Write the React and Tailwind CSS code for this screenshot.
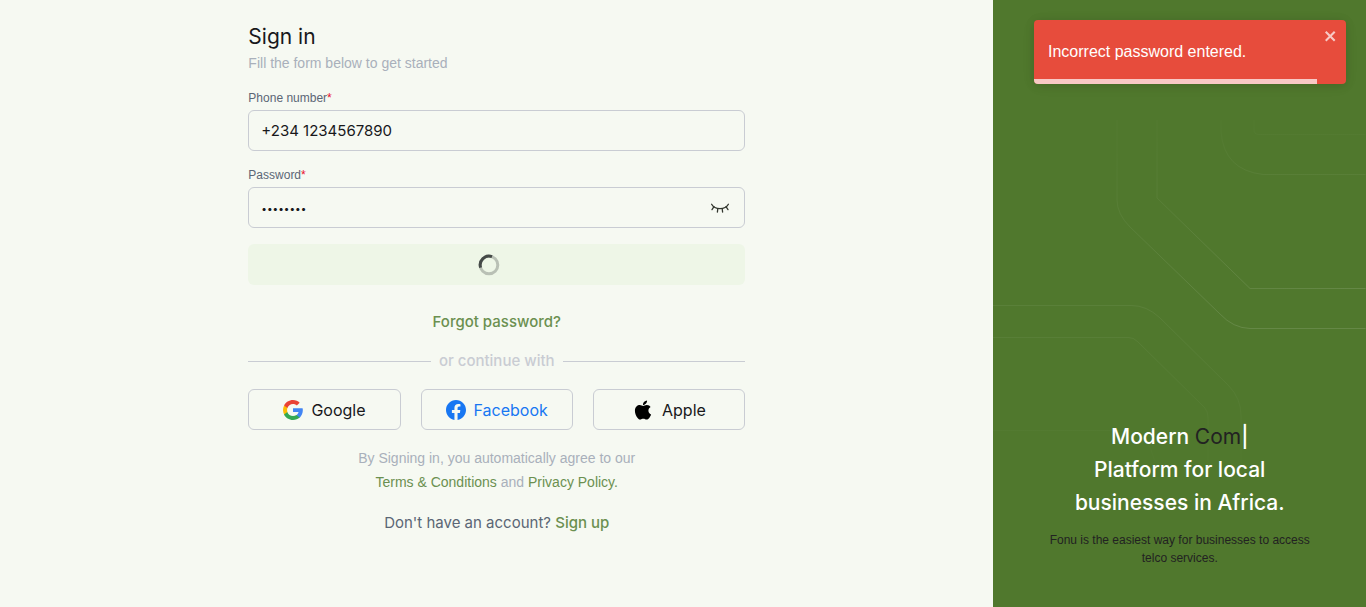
import { useState } from "react";
import { FaApple } from "react-icons/fa";

const fieldClass =
  "block h-[41px] w-full rounded-md border border-[#c9ccd3] bg-transparent px-3 text-[#18181b] outline-none";

const labelClass = "mb-1 block font-['Liberation_Sans',Arial,sans-serif] text-xs leading-4 text-[#5b6675]";

function EyeClosedIcon() {
  return (
    <svg width="20" height="20" viewBox="0 0 20 20" fill="none" stroke="#33372f" strokeWidth="1.3" strokeLinecap="round" aria-hidden="true">
      <path d="M1.6 6.2C3.2 9 6.2 10.600 10 10.600s6.8-1.600 8.400-4.400" />
      <path d="M4 8.700 2 11.600M16 8.700l2 2.900M7.800 10.600l-.4 3.400M12.200 10.600l.4 3.400" />
    </svg>
  );
}

function Spinner() {
  return (
    <svg className="mr-4" width="22" height="22" viewBox="0 0 22 22" fill="none" strokeWidth="3" aria-hidden="true">
      <circle cx="11" cy="11" r="8.8" stroke="#b9c0b5" />
      <path d="M2.6 13.600A8.800 8.800 0 0 1 14 2.700" stroke="#454a48" />
    </svg>
  );
}

function GoogleIcon() {
  return (
    <svg width="20" height="20" viewBox="0 0 24 24" aria-hidden="true">
      <path fill="#4285f4" d="M23.500 9.800H12v4.700h6.600c-.3 1.500-1.200 2.800-2.500 3.700v3h4c2.300-2.200 3.700-5.300 3.700-9.100 0-.8-.1-1.600-.3-2.300z" />
      <path fill="#34a853" d="M12 24c3.300 0 6-1.100 8-2.900l-3.900-3c-1.100.7-2.500 1.200-4.100 1.200-3.200 0-5.800-2.100-6.800-5h-4v3.100C3.200 21.300 7.300 24 12 24z" />
      <path fill="#fbbc05" d="M5.300 14.300c-.3-.7-.4-1.500-.4-2.300s.1-1.600.4-2.300V6.600h-4C.5 8.200 0 10.100 0 12s.5 3.800 1.300 5.400l4-3.100z" />
      <path fill="#ea4335" d="M12 4.800c1.800 0 3.400.6 4.600 1.800l3.400-3.400C18 1.200 15.200 0 12 0 7.300 0 3.200 2.700 1.300 6.600l4 3.100c.9-2.800 3.500-4.900 6.700-4.900z" />
    </svg>
  );
}

function FacebookIcon() {
  return (
    <svg width="20" height="20" viewBox="0 0 24 24" aria-hidden="true">
      <path fill="#1877f2" d="M24 12.073C24 5.446 18.627.073 12 .073S0 5.446 0 12.073c0 5.990 4.388 10.954 10.125 11.854v-8.385H7.078v-3.470h3.047V9.430c0-3.007 1.792-4.669 4.533-4.669 1.312 0 2.686.235 2.686.235v2.953H15.830c-1.491 0-1.956.925-1.956 1.874v2.250h3.328l-.532 3.470h-2.796v8.385C19.612 23.027 24 18.062 24 12.073z" />
    </svg>
  );
}

function SocialButton({ icon, label, blue }) {
  return (
    <button
      type="button"
      className={`flex h-[41px] flex-1 items-center justify-center gap-2 rounded-md border border-[#c9ccd3] text-base ${blue ? "text-[#1877f2]" : "text-[#18181b]"}`}
    >
      {icon}
      {label}
    </button>
  );
}

function CircuitLines() {
  return (
    <svg className="absolute inset-0 h-full w-full" viewBox="0 0 373 607" preserveAspectRatio="xMaxYMin slice" fill="none" aria-hidden="true">
      <defs>
        <linearGradient id="fadeUp" gradientUnits="userSpaceOnUse" x1="260" y1="330" x2="180" y2="130">
          <stop offset="0" stopColor="#fff" stopOpacity=".12" />
          <stop offset="1" stopColor="#fff" stopOpacity=".02" />
        </linearGradient>
        <linearGradient id="fadeRight" gradientUnits="userSpaceOnUse" x1="0" y1="120" x2="0" y2="176">
          <stop offset="0" stopColor="#fff" stopOpacity=".01" />
          <stop offset="1" stopColor="#fff" stopOpacity=".05" />
        </linearGradient>
        <linearGradient id="fadeDown" gradientUnits="userSpaceOnUse" x1="0" y1="300" x2="0" y2="490">
          <stop offset="0" stopColor="#fff" stopOpacity=".06" />
          <stop offset="1" stopColor="#fff" stopOpacity="0" />
        </linearGradient>
      </defs>
      <g stroke="url(#fadeUp)">
        <path d="M124.500 120v80q0 14 13 27l90 87q13 14 30 14.500H373" />
        <path d="M164.500 120v78l93 90.500H373" />
      </g>
      <g stroke="url(#fadeRight)">
        <path d="M228.500 120v12q3 38 42 42.500H373" />
        <path d="M261.500 120v10q0 4.500 5 4.500H373" />
      </g>
      <g stroke="url(#fadeDown)">
        <path d="M0 305.500h139q15 0 28 12l69 68q12.500 13 12.500 30V500" />
        <path d="M0 337.500h136q5 0 9 4l67 66q3.500 4 3.500 10V500" />
        <path d="M0 430.500h136q20 4 26 30" />
      </g>
    </svg>
  );
}

function Toast({ onClose }) {
  return (
    <div role="alert" className="absolute top-5 right-5 flex h-16 w-[312px] items-center overflow-hidden rounded bg-[#e74c3c] px-3.5 font-['Liberation_Sans',Arial,sans-serif] text-base text-white shadow-[0_1px_10px_rgba(0,0,0,0.1),0_2px_15px_rgba(0,0,0,0.05)]">
      <span>Incorrect password entered.</span>
      <button type="button" aria-label="Close" onClick={onClose} className="absolute top-2 right-2 text-white/70">
        <svg width="14" height="16" viewBox="0 0 14 16" fill="currentColor" aria-hidden="true">
          <path fillRule="evenodd" d="M7.710 8.230l3.750 3.750-1.480 1.480-3.750-3.750-3.750 3.750L1 11.980l3.750-3.750L1 4.480 2.480 3l3.750 3.750L9.980 3l1.480 1.480-3.750 3.750z" />
        </svg>
      </button>
      <div className="absolute bottom-0 left-0 h-[5px] w-[283px] bg-white/70" />
    </div>
  );
}

export default function App() {
  const [phone, setPhone] = useState("+234 1234567890");
  const [password, setPassword] = useState("password");
  const [visible, setVisible] = useState(false);
  const [toastOpen, setToastOpen] = useState(true);

  return (
    <div className="flex min-h-screen bg-[#f6f9f2] font-[Inter,sans-serif]">
      <main className="w-8/11 pt-[23px] pb-8">
        <form className="mx-auto w-1/2" onSubmit={(e) => e.preventDefault()}>
          <h1 className="text-[21px] leading-7 text-[#18181b]">Sign in</h1>
          <p className="font-['Liberation_Sans',Arial,sans-serif] text-sm leading-6 text-[#a9b0bb]">Fill the form below to get started</p>

          <div className="mt-[15px]">
            <label htmlFor="phone" className={labelClass}>
              Phone number<span className="text-[#e8112d]">*</span>
            </label>
            <input id="phone" type="tel" value={phone} onChange={(e) => setPhone(e.target.value)} className={`${fieldClass} text-[15px]`} />
          </div>

          <div className="mt-4">
            <label htmlFor="password" className={labelClass}>
              Password<span className="text-[#e8112d]">*</span>
            </label>
            <div className="relative">
              <input
                id="password"
                type={visible ? "text" : "password"}
                value={password}
                onChange={(e) => setPassword(e.target.value)}
                className={`${fieldClass} ${visible ? "text-[15px]" : "text-[10px]"}`}
              />
              <button type="button" aria-label="Show password" onClick={() => setVisible(!visible)} className="absolute inset-y-0 right-[15px] flex items-center">
                <EyeClosedIcon />
              </button>
            </div>
          </div>

          <button type="submit" aria-label="Signing in" className="mt-4 flex h-[41px] w-full items-center justify-center rounded-md bg-[#eef6e7]">
            <Spinner />
          </button>

          <p className="mt-[25px] text-center text-[15px] leading-6">
            <a href="#forgot" className="font-medium text-[#6b9050]">Forgot password?</a>
          </p>

          <div className="mt-[15px] flex items-center gap-2 text-[15px] leading-6 text-[#c9ccd3]">
            <span className="h-px flex-1 bg-[#c9ccd3]" />
            <span className="font-medium">or continue with</span>
            <span className="h-px flex-1 bg-[#c9ccd3]" />
          </div>

          <div className="mt-4 flex gap-5">
            <SocialButton icon={<GoogleIcon />} label="Google" />
            <SocialButton icon={<FacebookIcon />} label="Facebook" blue />
            <SocialButton icon={<FaApple size={22} color="#000" />} label="Apple" />
          </div>

          <p className="mt-4 text-center font-['Liberation_Sans',Arial,sans-serif] text-sm leading-6 text-[#a9b0bb]">
            By Signing in, you automatically agree to our
            <br />
            <a href="#terms" className="text-[#6b9050]">Terms &amp; Conditions</a> and{" "}
            <a href="#privacy" className="text-[#6b9050]">Privacy Policy.</a>
          </p>

          <p className="mt-[17px] text-center text-[15px] leading-6 text-[#5b6675]">
            Don't have an account? <a href="#signup" className="font-medium text-[#6b9050]">Sign up</a>
          </p>
        </form>
      </main>

      <aside className="relative flex w-3/11 flex-col justify-end bg-[#50782d] px-10 pb-10 text-center">
        <CircuitLines />
        <h2 className="relative text-[21px] leading-[33px] font-medium text-white">
          Modern <span className="font-normal text-[#222]">Com</span>|
          <br />
          Platform for local
          <br />
          businesses in Africa.
        </h2>
        <p className="relative mt-3 font-['Liberation_Sans',Arial,sans-serif] text-xs leading-[18px] text-[#222]">
          Fonu is the easiest way for businesses to access
          <br />
          telco services.
        </p>
        {toastOpen && <Toast onClose={() => setToastOpen(false)} />}
      </aside>
    </div>
  );
}
